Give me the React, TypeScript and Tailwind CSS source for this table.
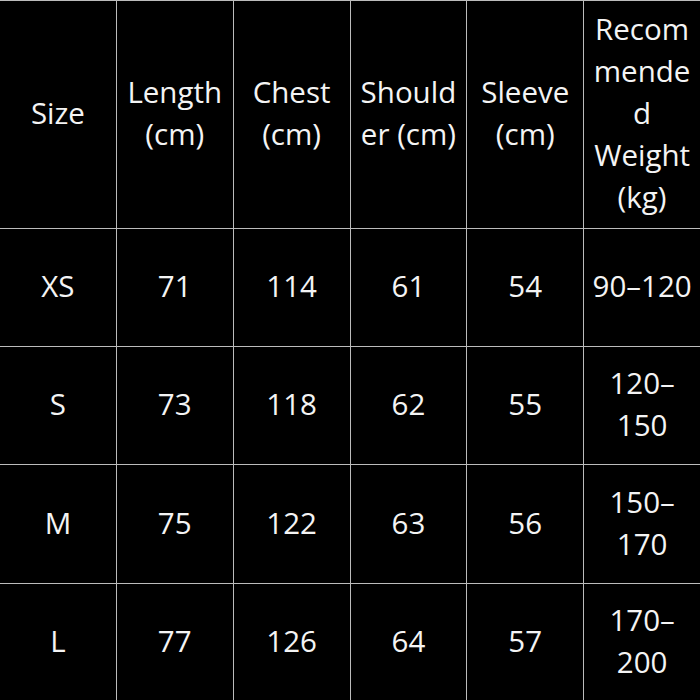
const HEADERS: string[][] = [
  ["Size"],
  ["Length", "(cm)"],
  ["Chest", "(cm)"],
  ["Should", "er (cm)"],
  ["Sleeve", "(cm)"],
  ["Recom", "mende", "d", "Weight", "(kg)"],
]

const ROWS: string[][][] = [
  [["XS"], ["71"], ["114"], ["61"], ["54"], ["90–120"]],
  [["S"], ["73"], ["118"], ["62"], ["55"], ["120–", "150"]],
  [["M"], ["75"], ["122"], ["63"], ["56"], ["150–", "170"]],
  [["L"], ["77"], ["126"], ["64"], ["57"], ["170–", "200"]],
]

function Cell({ lines }: { lines: string[] }) {
  return (
    <div className="bg-black flex flex-col items-center justify-center text-center pb-[3px]">
      {lines.map((l, i) => (
        <span key={i} className="whitespace-nowrap">
          {l}
        </span>
      ))}
    </div>
  )
}

export default function App() {
  return (
    <div
      className="w-[700px] h-[700px] overflow-hidden bg-[#bcbcbc] pt-px text-[#f4f4f4] text-[29.5px] leading-[42px]"
      style={{ fontFamily: '"Open Sans", sans-serif' }}
    >
      <div className="grid grid-cols-6 gap-px grid-rows-[227px_117px_117px_118px_117px]">
        {HEADERS.map((h, i) => (
          <Cell key={`h${i}`} lines={h} />
        ))}
        {ROWS.map((row, r) =>
          row.map((c, i) => <Cell key={`${r}-${i}`} lines={c} />)
        )}
      </div>
    </div>
  )
}
